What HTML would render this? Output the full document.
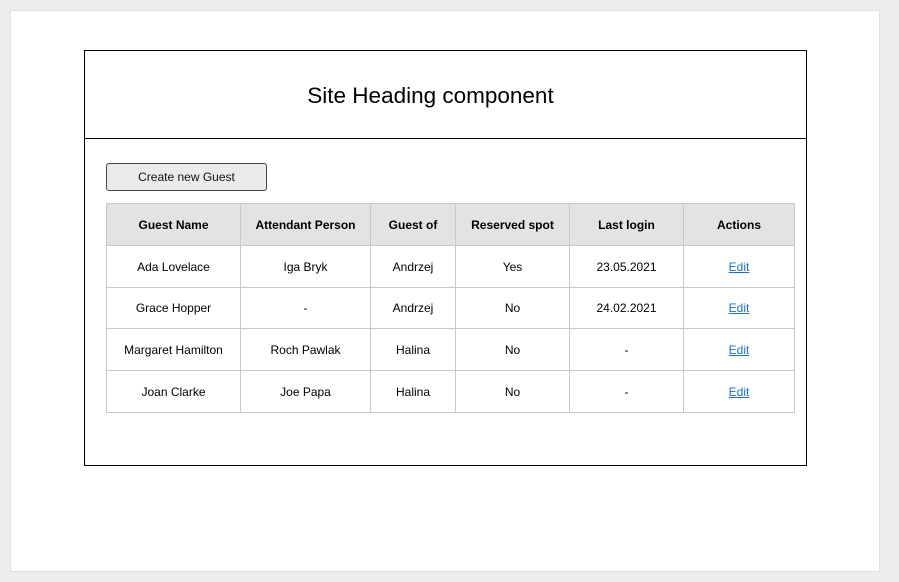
<html><head><style>
body{margin:0;width:899px;height:582px;background:#ededed;font-family:"Liberation Sans",sans-serif;position:relative;overflow:hidden}
.p{position:absolute;left:10px;top:10px;width:868px;height:560px;background:#fff;border:1px solid #e0e0e0}
.f{position:absolute;left:84px;top:50px;width:721px;height:414px;border:1px solid #000}
.h{position:absolute;left:0;top:0;width:691px;padding-right:30px;height:87px;border-bottom:1px solid #000;text-align:center;line-height:90px;font-size:22.5px;color:#000}
.b{position:absolute;left:106px;top:163px;width:159px;height:26px;border:1px solid #444;border-radius:3px;background:#ebebeb;font-size:12px;text-align:center;line-height:27px;color:#111}
table{position:absolute;left:106px;top:203px;border-collapse:collapse;font-size:12px;color:#000}
td,th{border:1px solid #c8c8c8;text-align:center;padding:0;height:42px}
tr.s td{height:41px}
th{background:#e3e3e3;font-weight:bold}
a{color:#1a6fd6;text-decoration:underline}
</style></head><body>
<div class="p"></div>
<div class="f"><div class="h">Site Heading component</div></div>
<div class="b">Create new Guest</div>
<table>
<tr><th style="width:133px">Guest Name</th><th style="width:129px">Attendant Person</th><th style="width:84px">Guest of</th><th style="width:113px">Reserved spot</th><th style="width:113px">Last login</th><th style="width:110px">Actions</th></tr>
<tr><td>Ada Lovelace</td><td>Iga Bryk</td><td>Andrzej</td><td>Yes</td><td>23.05.2021</td><td><a>Edit</a></td></tr>
<tr class="s"><td>Grace Hopper</td><td>-</td><td>Andrzej</td><td>No</td><td>24.02.2021</td><td><a>Edit</a></td></tr>
<tr><td>Margaret Hamilton</td><td>Roch Pawlak</td><td>Halina</td><td>No</td><td>-</td><td><a>Edit</a></td></tr>
<tr><td>Joan Clarke</td><td>Joe Papa</td><td>Halina</td><td>No</td><td>-</td><td><a>Edit</a></td></tr>
</table>
</body></html>
